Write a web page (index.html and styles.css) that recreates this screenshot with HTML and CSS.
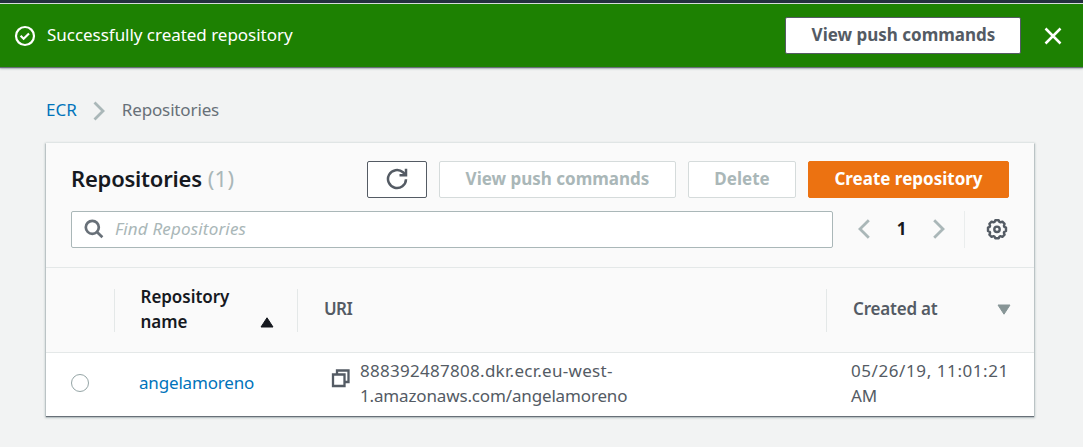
FILE: index.html
```html
<!DOCTYPE html>
<html lang="en">
<head>
<meta charset="utf-8">
<title>Amazon ECR</title>
<link rel="stylesheet" href="styles.css">
</head>
<body>
<div class="topbar"></div>
<div class="flash">
  <svg class="flash-icon" width="22" height="22" viewBox="0 0 22 22"><circle cx="11" cy="11" r="9"/><path d="M6.600 10.800l3 2.900 5.400-5.200"/></svg>
  <span class="flash-text"><span class="t-flash">Successfully created repository</span></span>
  <button class="btn flash-btn"><span class="t-push">View push commands</span></button>
  <svg class="close" width="18" height="18" viewBox="0 0 18 18"><path d="M1.500 1.500l15 15M16.500 1.500l-15 15"/></svg>
</div>
<nav class="crumbs">
  <a class="link t-ecr">ECR</a>
  <svg class="chev crumb-sep" width="12" height="20" viewBox="0 0 12 20"><path d="M1.500 1.500l8.500 8.500-8.500 8.500"/></svg>
  <span class="t-crumb">Repositories</span>
</nav>
<main class="card">
  <header class="card-head">
    <div class="title-row">
      <h1 class="title"><span class="t-title">Repositories</span><span class="count">(1)</span></h1>
      <button class="btn refresh"><svg width="22" height="22" viewBox="0 0 22 22"><path d="M20 11.200a9 9 0 1 1-3-6.900l2.200 2"/><path d="M20 .8v6.500h-6.500"/></svg></button>
      <button class="btn disabled push"><span class="t-push">View push commands</span></button>
      <button class="btn disabled delete"><span class="t-delete">Delete</span></button>
      <button class="btn primary"><span class="t-create">Create repository</span></button>
    </div>
    <div class="tools">
      <div class="search">
        <svg width="20" height="20" viewBox="0 0 20 20"><circle cx="8.300" cy="8.300" r="6.500"/><path d="M13 13l5.400 5.200"/></svg>
        <span class="t-find">Find Repositories</span>
      </div>
      <div class="pager">
        <svg class="chev" width="12" height="20" viewBox="0 0 12 20"><path d="M10.800 1.200L2 10l8.800 8.800"/></svg>
        <b class="page">1</b>
        <svg class="chev" width="12" height="20" viewBox="0 0 12 20"><path d="M1.200 1.200L10 10l-8.800 8.800"/></svg>
      </div>
      <div class="settings">
        <svg width="22" height="22" viewBox="0 0 22 22"><path d="M9.300 2.200h3.400l.8 1.800 1 .4 1.900-.7 2.200 2.200-.7 1.900.4 1 1.700.8v3.400l-1.700.8-.4 1 .7 1.900-2.200 2.200-1.900-.7-1 .4-.8 1.700H9.300l-.8-1.700-1-.4-1.900.7-2.200-2.200.7-1.900-.4-1-1.700-.8V9.600l1.700-.8.4-1-.7-1.900 2.200-2.200 1.900.7 1-.4z"/><circle cx="11" cy="11.300" r="2.700"/></svg>
      </div>
    </div>
  </header>
  <div class="grid thead">
    <div class="cell select"></div>
    <div class="cell name-head"><span class="t-name">Repository<br>name</span><svg class="sort" width="14" height="11" viewBox="0 0 14 11"><path d="M7 .8L13 10H1z"/></svg></div>
    <div class="cell uri-head"><span class="t-uri">URI</span></div>
    <div class="cell date-head"><span class="t-created">Created at</span><svg class="sort muted" width="14" height="11" viewBox="0 0 14 11"><path d="M7 10.200L13 1H1z"/></svg></div>
  </div>
  <div class="grid trow">
    <div class="select"><span class="radio"></span></div>
    <a class="link t-repo">angelamoreno</a>
    <div class="uri">
      <svg width="20" height="20" viewBox="0 0 20 20"><path d="M2 6.500h11.500v11.500H2z"/><path d="M6 6V2.500h11.500v11.500H14"/></svg>
      <div><span class="t-uri1">888392487808.dkr.ecr.eu-west-</span><br><span class="t-uri2">1.amazonaws.com/angelamoreno</span></div>
    </div>
    <div class="date"><span class="t-date">05/26/19, 11:01:21</span><br><span class="t-am">AM</span></div>
  </div>
</main>
</body>
</html>
```
FILE: styles.css
```css
* { box-sizing: border-box; }
body {
  margin: 0;
  height: 447px;
  overflow: hidden;
  background: #f2f3f3;
  color: #545b64;
  font: 17px/25px "Noto Sans", "Open Sans", sans-serif;
}
svg { display: block; flex: none; fill: none; stroke: currentColor; }
span, a, b { white-space: nowrap; }
.topbar { height: 4px; background: #232f3e; border-bottom: 1px solid #d5dbdb; }
.flash {
  display: flex;
  align-items: center;
  height: 63px;
  padding: 0 21px 0 14px;
  background: #1d8102;
  color: #fff;
  box-shadow: 0 1px 1px #687078, 0 2px 2px #bcc2c4;
}
.flash-icon { stroke-width: 2.2; }
.flash-text { flex: 1; padding: 0 0 2px 11px; }
.t-flash { letter-spacing: -0.03px; }
.close { margin-left: 23px; stroke-width: 2.5; }
.btn {
  display: flex;
  align-items: center;
  justify-content: center;
  height: 37px;
  padding: 0 0 2px;
  border: 1px solid #545b64;
  border-radius: 2px;
  background: #fff;
  color: #545b64;
  font: 700 17px/25px "Noto Sans", "Open Sans", sans-serif;
}
.flash-btn { width: 236px; padding-left: 1px; }
.crumbs {
  display: flex;
  align-items: center;
  height: 25px;
  margin: 30px 0 21px 46px;
  color: #687078;
}
.crumb-sep { margin: 3px 17px 0 16px; }
.t-crumb { letter-spacing: -0.14px; }
.link { color: #0073bb; }
.chev { color: #aab7b8; stroke-width: 2.8; }
.card {
  width: 988px;
  margin-left: 46px;
  background: #fff;
  box-shadow: 0 1px 1px #687078, 0 1px 2px 1px #bcc6c7;
}
.card-head {
  height: 125px;
  padding: 18px 25px 0;
  background: #fafafa;
  border-bottom: 1px solid #e4e8e8;
}
.title-row { display: flex; align-items: center; gap: 12px; height: 37px; }
.title {
  flex: 1;
  display: flex;
  gap: 6px;
  margin: 0;
  padding-bottom: 2px;
  color: #16191f;
  font-size: 22px;
  font-weight: 600;
  letter-spacing: -0.22px;
}
.count { color: #aab7b8; font-weight: 400; letter-spacing: 0.2px; }
.refresh { width: 60px; padding: 0; }
.refresh svg { margin-top: -2px; stroke-width: 2.5; }
.push { width: 237px; }
.delete { width: 108px; }
.primary { width: 201px; background: #ec7211; border-color: #ec7211; color: #fff; }
.disabled { border-color: #d5dbdb; color: #aab7b8; }
.tools { display: flex; margin-top: 13px; height: 37px; }
.search {
  display: flex;
  align-items: center;
  gap: 11px;
  width: 762px;
  padding: 0 0 2px 12px;
  background: #fff;
  border: 1px solid #aab7b8;
  border-radius: 2px;
  color: #aab7b8;
  font-style: italic;
  letter-spacing: 0.17px;
}
.search svg { margin-top: 1px; color: #687078; stroke-width: 2.7; }
.pager {
  display: flex;
  align-items: center;
  justify-content: space-between;
  width: 132px;
  padding: 0 19px 2px 25px;
  border-right: 1px solid #eaeded;
}
.page { color: #16191f; }
.settings { display: flex; align-items: center; padding: 0 0 2px 21px; }
.settings svg { stroke-width: 2.4; stroke-linejoin: round; }
.grid { display: grid; grid-template-columns: 68px 183px 529px 208px; }
.thead {
  height: 85px;
  padding-top: 21px;
  background: #fafafa;
  border-bottom: 1px solid #e4e8e8;
  font-weight: 600;
}
.cell {
  display: flex;
  align-items: center;
  height: 43px;
  padding: 0 0 5px 26px;
  border-left: 1px solid #e4e8e8;
}
.cell.select { border: 0; }
.name-head { align-items: flex-end; justify-content: space-between; padding: 0 23px 0 25.5px; color: #16191f; }
.t-name { margin-bottom: -2px; letter-spacing: -0.05px; }
.name-head .sort { margin-bottom: 4px; }
.t-uri { letter-spacing: -0.6px; }
.t-created { letter-spacing: -0.2px; }
.date-head { justify-content: space-between; padding-right: 23px; }
.date-head .sort { margin-top: 3px; }
.sort { fill: currentColor; stroke-linejoin: round; }
.muted { color: #879596; }
.trow { height: 63px; padding-bottom: 4px; align-items: center; }
.select { padding-left: 25px; }
.radio { display: block; width: 18px; height: 18px; border: 1px solid #95a5a6; border-radius: 50%; background: #fff; }
.t-repo { padding-left: 25px; letter-spacing: -0.17px; }
.uri { display: flex; gap: 9px; padding-left: 34px; }
.uri svg { margin-top: 10px; stroke-width: 2.3; }
.t-uri1 { letter-spacing: 0.28px; }
.t-uri2 { letter-spacing: -0.15px; }
.date { padding-left: 25px; }
.t-date { letter-spacing: 0.58px; }
```
